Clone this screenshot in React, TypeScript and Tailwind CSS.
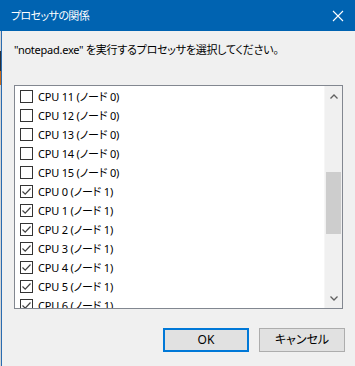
import React from "react";

const font = { fontFamily: '"Noto Sans", "Noto Sans CJK JP", sans-serif' };

const rows: { label: string; checked: boolean }[] = [
  { label: "CPU 11 (ノード 0)", checked: false },
  { label: "CPU 12 (ノード 0)", checked: false },
  { label: "CPU 13 (ノード 0)", checked: false },
  { label: "CPU 14 (ノード 0)", checked: false },
  { label: "CPU 15 (ノード 0)", checked: false },
  { label: "CPU 0 (ノード 1)", checked: true },
  { label: "CPU 1 (ノード 1)", checked: true },
  { label: "CPU 2 (ノード 1)", checked: true },
  { label: "CPU 3 (ノード 1)", checked: true },
  { label: "CPU 4 (ノード 1)", checked: true },
  { label: "CPU 5 (ノード 1)", checked: true },
  { label: "CPU 6 (ノード 1)", checked: true },
];

function Box({ checked }: { checked: boolean }) {
  return (
    <div className="w-[13px] h-[13px] border border-[#333333] bg-white flex items-center justify-center shrink-0">
      {checked && (
        <svg width="11" height="11" viewBox="0 0 11 11">
          <path d="M1.5 5.5 L4.2 8.2 L9.5 2.5" fill="none" stroke="#404040" strokeWidth="1.2" />
        </svg>
      )}
    </div>
  );
}

export default function App() {
  return (
    <div
      className="w-[355px] h-[366px] bg-[#f0f0f0] flex flex-col overflow-hidden text-black [font-feature-settings:'palt']"
      style={font}
    >
      <div className="h-[31px] bg-[#0063b1] flex items-center justify-between pl-[11px] pr-[9px] shrink-0">
        <span className="text-white text-[11px] leading-none tracking-[-0.6px]">プロセッサの関係</span>
        <svg width="12" height="12" viewBox="0 0 12 12" className="mr-[2px]">
          <path d="M1 1 L11 11 M11 1 L1 11" stroke="white" strokeWidth="1.1" />
        </svg>
      </div>
      <div className="flex flex-1 min-h-0">
        <div className="w-[1px] bg-[#d4d4d4] flex flex-col">
          <div className="h-[20px]" />
          <div className="h-[20px] bg-[#2a2f38]" />
          <div className="h-[14px] bg-[#c86a1a]" />
        </div>
        <div className="w-[1px] bg-[#2b6cb0]" />
        <div className="flex-1 flex flex-col">
          <div className="pl-[12px] pt-[11px] h-[54px] text-[11px] leading-[16px] tracking-[-0.25px]">
            "notepad.exe" を実行するプロセッサを選択してください。
          </div>
          <div className="ml-[12px] w-[329px] h-[224px] border border-[#828790] bg-white flex overflow-hidden">
            <div className="flex-1 flex flex-col pt-[4px] pl-[5px] overflow-hidden">
              {rows.map((r) => (
                <div key={r.label} className="h-[19px] shrink-0 flex items-start gap-[5px]">
                  <Box checked={r.checked} />
                  <span className="text-[11px] leading-[13px] whitespace-nowrap tracking-[-0.2px]">{r.label}</span>
                </div>
              ))}
            </div>
            <div className="w-[18px] bg-[#f0f0f0] border-l border-[#f6f6f6] flex flex-col items-center">
              <div className="h-[20px] flex items-center justify-center">
                <svg width="8" height="5" viewBox="0 0 8 5">
                  <path d="M0.5 4.5 L4 1 L7.5 4.5" fill="none" stroke="#606060" strokeWidth="1.3" />
                </svg>
              </div>
              <div className="h-[66px]" />
              <div className="w-[15px] h-[62px] bg-[#cdcdcd]" />
              <div className="flex-1" />
              <div className="h-[20px] flex items-center justify-center">
                <svg width="8" height="5" viewBox="0 0 8 5">
                  <path d="M0.5 0.5 L4 4 L7.5 0.5" fill="none" stroke="#606060" strokeWidth="1.3" />
                </svg>
              </div>
            </div>
          </div>
          <div className="flex justify-end gap-[10px] pr-[10px] mt-[19px]">
            <div className="w-[86px] h-[24px] border-2 border-[#0078d7] bg-[#e1e1e1] flex items-center justify-center text-[12px]">
              OK
            </div>
            <div className="w-[86px] h-[24px] border border-[#adadad] bg-[#e1e1e1] flex items-center justify-center text-[12px]">
              キャンセル
            </div>
          </div>
        </div>
      </div>
    </div>
  );
}
